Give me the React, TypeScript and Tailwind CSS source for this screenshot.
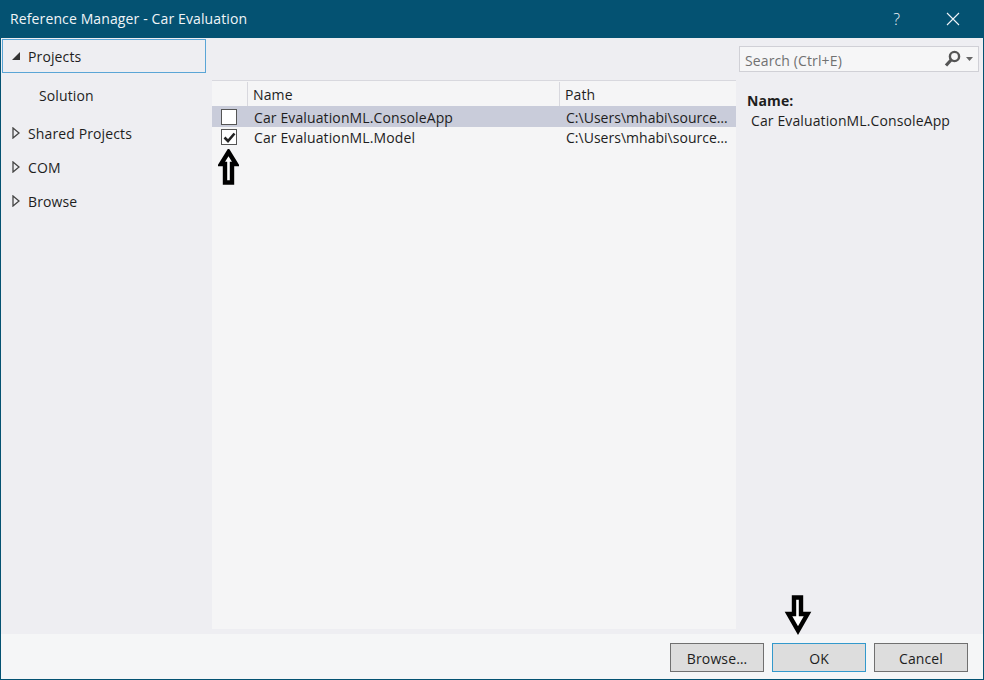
const font = { fontFamily: '"Open Sans", "Noto Sans", sans-serif' };

function TreeRow({ label }: { label: string }) {
  return (
    <div className="h-[34px] flex items-center pl-[10px]">
      <svg width="8" height="12" viewBox="0 0 8 12" className="mr-[8px] shrink-0">
        <path d="M1 1 L7 6 L1 11 Z" fill="none" stroke="#444" strokeWidth="1.3" />
      </svg>
      <span>{label}</span>
    </div>
  );
}

function Btn({ label, focus }: { label: string; focus?: boolean }) {
  return (
    <div
      className={`w-[94px] h-[29px] flex items-center justify-center pt-px bg-[#dddddd] border text-[#1e1e1e] ${
        focus ? "border-[#3399cc]" : "border-[#707070]"
      }`}
    >
      {label}
    </div>
  );
}

export default function App() {
  return (
    <div
      style={font}
      className="relative w-[984px] h-[680px] flex flex-col overflow-hidden bg-[#eeeef2] border-l border-r border-b border-[#045272] text-[14px] tracking-[0.12px] text-[#1e1e1e]"
    >
      <div className="h-[38px] shrink-0 bg-[#045272] flex items-center text-[#f0f5f8] pl-[9px] pb-[1px]">
        <span className="flex-1">Reference Manager - Car Evaluation</span>
        <span className="mr-[46px] text-[16px] font-light">?</span>
        <svg width="14" height="14" viewBox="0 0 14 14" className="mr-[23px]">
          <path d="M1 1 L13 13 M13 1 L1 13" stroke="#f0f5f8" strokeWidth="1.1" />
        </svg>
      </div>

      <div className="flex-1 flex min-h-0">
        <div className="w-[211px] shrink-0 pt-px pl-px">
          <div className="w-[204px] h-[34px] border border-[#5aa5d6] flex items-center pl-[9px]">
            <svg width="8" height="8" viewBox="0 0 8 8" className="mr-[8px] shrink-0">
              <path d="M8 0 V8 H0 Z" fill="#333" />
            </svg>
            <span>Projects</span>
          </div>
          <div className="h-[38px] pl-[37px] mt-[3px] mb-[2px] flex items-center">Solution</div>
          <TreeRow label="Shared Projects" />
          <TreeRow label="COM" />
          <TreeRow label="Browse" />
        </div>

        <div className="w-[524px] shrink-0 pt-[42px] pb-[5px] flex flex-col">
          <div className="flex-1 bg-[#f5f5f6] flex flex-col">
            <div className="h-[26px] flex items-stretch border-t border-[#d8d8de] shrink-0 pt-px text-[#1e1e1e]">
              <div className="w-[36px] border-r border-[#d8d8de]" />
              <div className="w-[312px] border-r border-[#d8d8de] pl-[5px] flex items-center">Name</div>
              <div className="flex-1 pl-[5px] flex items-center">Path</div>
            </div>
            <div className="h-[21px] bg-[#c9ccda] flex items-center">
              <div className="w-[16px] h-[16px] ml-[9px] border border-[#555] bg-white shrink-0" />
              <div className="w-[323px] pl-[17px] pt-px">Car EvaluationML.ConsoleApp</div>
              <div className="pl-[6px] pt-px tracking-[0.02px]">C:\Users\mhabi\source…</div>
            </div>
            <div className="h-[20px] flex items-center">
              <div className="w-[16px] h-[16px] ml-[9px] border border-[#555] bg-white shrink-0 flex items-center justify-center">
                <svg width="13" height="11" viewBox="0 0 13 11">
                  <path d="M1.5 5.5 L5 9 L11.5 1.5" fill="none" stroke="#222" strokeWidth="2.6" />
                </svg>
              </div>
              <div className="w-[323px] pl-[17px]">Car EvaluationML.Model</div>
              <div className="pl-[6px] tracking-[0.02px]">C:\Users\mhabi\source…</div>
            </div>
            <div className="pl-[6px] pt-[2px]">
              <svg width="21" height="36" viewBox="0 0 21 36">
                <path d="M10.5 3 L18 15 H14 V33.5 H7 V15 H3 Z" fill="#fff" stroke="#000" strokeWidth="4.4" />
              </svg>
            </div>
          </div>
        </div>

        <div className="flex-1 pl-[3px]">
          <div className="mt-[8px] w-[240px] h-[26px] bg-[#f6f6f7] border border-[#d0d0d6] flex items-center pl-[5px] pt-[2px] text-[#717171]">
            <span className="flex-1">Search (Ctrl+E)</span>
            <svg width="18" height="18" viewBox="0 0 18 18" className="mr-[4px] -mt-[2px]">
              <circle cx="10.5" cy="6.5" r="4.6" fill="none" stroke="#555" strokeWidth="2.4" />
              <path d="M7.5 9.5 L2 15.5" stroke="#555" strokeWidth="3.2" />
            </svg>
            <svg width="7" height="4" viewBox="0 0 7 4" className="mr-[5px] -mt-[2px]">
              <path d="M0 0 H7 L3.5 4 Z" fill="#666" />
            </svg>
          </div>
          <div className="pl-[8px] mt-[19px] font-bold leading-[20px]">Name:</div>
          <div className="pl-[12px] leading-[20px]">Car EvaluationML.ConsoleApp</div>
        </div>
      </div>

      <div className="h-[45px] shrink-0 bg-[#f5f6f7] flex items-start justify-end gap-[8px] pr-[15px] pt-[9px]">
        <Btn label="Browse…" />
        <Btn label="OK" focus />
        <Btn label="Cancel" />
      </div>

      <svg width="28" height="40" viewBox="0 0 28 40" className="absolute left-[783px] top-[595px]">
        <path d="M10 2.5 H17 V19 H23.5 L14 35.5 L4.5 19 H10 Z" fill="#fff" stroke="#000" strokeWidth="4.4" />
      </svg>
    </div>
  );
}
